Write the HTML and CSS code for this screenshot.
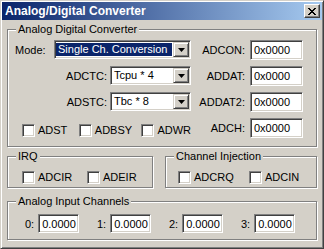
FILE: index.html
```html
<!DOCTYPE html>
<html lang="en">
<head>
  <meta charset="UTF-8" />
  <meta name="viewport" content="width=device-width, initial-scale=1.0"/>
  <title>Analog/Digital Converter</title>
  <link rel="stylesheet" href="styles.css">
</head>
<body>
  <div class="window">
    <div class="titlebar">
      <span class="title">Analog/Digital Converter</span>
      <div class="close-btn">
        <svg width="8" height="7" viewBox="0 0 8 7" shape-rendering="crispEdges">
          <path d="M0 0h2v1h-2z M6 0h2v1h-2z M1 1h2v1h-2z M5 1h2v1h-2z M2 2h4v1h-4z M3 3h2v1h-2z M2 4h4v1h-4z M1 5h2v1h-2z M5 5h2v1h-2z M0 6h2v1h-2z M6 6h2v1h-2z" fill="#000"/>
        </svg>
      </div>
    </div>

    <div class="client">
      <!-- main converter settings -->
      <div class="group adc">
        <span class="caption">Analog Digital Converter</span>
        <div class="adc-grid">
          <div class="row mode-row">
            <span class="lbl">Mode:</span>
            <div class="combo wide">
              <span class="value selected">Single Ch. Conversion</span>
              <span class="drop"><svg width="7" height="4" viewBox="0 0 7 4"><path d="M0 0h7l-3.5 4z" fill="#000"/></svg></span>
            </div>
          </div>
          <div class="row reg"><span class="lbl">ADCON:</span><input class="edit" type="text" value="0x0000"></div>

          <div class="row right">
            <span class="lbl">ADCTC:</span>
            <div class="combo short">
              <span class="value">Tcpu * 4</span>
              <span class="drop"><svg width="7" height="4" viewBox="0 0 7 4"><path d="M0 0h7l-3.5 4z" fill="#000"/></svg></span>
            </div>
          </div>
          <div class="row reg"><span class="lbl">ADDAT:</span><input class="edit" type="text" value="0x0000"></div>

          <div class="row right">
            <span class="lbl">ADSTC:</span>
            <div class="combo short">
              <span class="value">Tbc * 8</span>
              <span class="drop"><svg width="7" height="4" viewBox="0 0 7 4"><path d="M0 0h7l-3.5 4z" fill="#000"/></svg></span>
            </div>
          </div>
          <div class="row reg"><span class="lbl">ADDAT2:</span><input class="edit" type="text" value="0x0000"></div>

          <div class="row checks">
            <label class="check w54"><span class="box"></span>ADST</label>
            <label class="check w60"><span class="box"></span>ADBSY</label>
            <label class="check"><span class="box"></span>ADWR</label>
          </div>
          <div class="row reg"><span class="lbl">ADCH:</span><input class="edit" type="text" value="0x0000"></div>
        </div>
      </div>

      <div class="pair">
        <div class="group irq">
          <span class="caption">IRQ</span>
          <div class="check-row">
            <label class="check w65"><span class="box"></span>ADCIR</label>
            <label class="check"><span class="box"></span>ADEIR</label>
          </div>
        </div>
        <div class="group inj">
          <span class="caption">Channel Injection</span>
          <div class="check-row">
            <label class="check w71"><span class="box"></span>ADCRQ</label>
            <label class="check"><span class="box"></span>ADCIN</label>
          </div>
        </div>
      </div>

      <div class="group channels">
        <span class="caption">Analog Input Channels</span>
        <div class="chan-row">
          <div class="chan"><span class="lbl">0:</span><input class="edit num" type="text" value="0.0000"></div>
          <div class="chan"><span class="lbl">1:</span><input class="edit num" type="text" value="0.0000"></div>
          <div class="chan"><span class="lbl">2:</span><input class="edit num" type="text" value="0.0000"></div>
          <div class="chan"><span class="lbl">3:</span><input class="edit num" type="text" value="0.0000"></div>
        </div>
      </div>
    </div>
  </div>
</body>
</html>
```

FILE: styles.css
```css
:root {
  --face: #d4d0c8;
  --shadow: #808080;
  --dark: #404040;
  --light: #fff;
  --caption-a: #0a246a;
  --caption-b: #a6caf0;
  --font-ui: 'Liberation Sans', Arial, sans-serif;
}

html, body {
  margin: 0;
  padding: 0;
  background: var(--face);
  font-family: var(--font-ui);
  font-size: 11px;
  color: #000;
}

.window {
  width: 324px;
  height: 249px;
  box-sizing: border-box;
  border: 1px solid;
  border-color: var(--face) var(--dark) var(--dark) var(--face);
  box-shadow: inset 1px 1px var(--light), inset -1px -1px var(--shadow);
  padding: 1px;
  display: flex;
  flex-direction: column;
}

.titlebar {
  height: 18px;
  display: flex;
  align-items: center;
  justify-content: space-between;
  padding: 0 2px 0 3px;
  background: linear-gradient(to right, var(--caption-a), var(--caption-b));
}

.title {
  color: #fff;
  font-weight: bold;
  font-size: 12px;
}

.close-btn {
  width: 16px;
  height: 14px;
  box-sizing: border-box;
  display: flex;
  align-items: center;
  justify-content: center;
  background: var(--face);
  border: 1px solid;
  border-color: var(--light) var(--dark) var(--dark) var(--light);
  box-shadow: inset -1px -1px var(--shadow);
}

.client {
  flex: 1;
  padding: 9px 5px 0 5px;
  display: flex;
  flex-direction: column;
}

/* etched group box */
.group {
  position: relative;
  box-sizing: border-box;
  border: 1px solid var(--shadow);
  box-shadow: inset 1px 1px var(--light), 1px 1px var(--light);
}

.caption {
  position: absolute;
  top: -7px;
  left: 8px;
  padding: 0 2px;
  line-height: 13px;
  background: var(--face);
}

.adc {
  height: 118px;
  padding: 10px 13px 0 7px;
}

.adc-grid {
  display: grid;
  grid-template-columns: 176px 1fr;
  grid-auto-rows: 26px;
}

.row {
  display: flex;
  align-items: flex-start;
  gap: 5px;
}

.row .lbl {
  line-height: 20px;
}

.mode-row {
  justify-content: space-between;
}

.row.right {
  justify-content: flex-end;
  gap: 3px;
}

.row.reg {
  justify-content: flex-end;
}

.row.checks {
  padding-left: 7px;
  align-items: center;
  height: 24px;
}

.pair {
  margin-top: 9px;
  display: flex;
  justify-content: space-between;
}

.irq {
  width: 146px;
  height: 32px;
}

.inj {
  width: 152px;
  height: 32px;
}

.check-row {
  display: flex;
  padding: 14px 0 0 14px;
}

.inj .check-row {
  padding-left: 12px;
}

.channels {
  margin-top: 13px;
  height: 39px;
}

.chan-row {
  display: flex;
  padding: 12px 0 0 17px;
}

.chan {
  display: flex;
  align-items: center;
  gap: 4px;
  width: 72px;
}

/* controls */
.edit {
  box-sizing: border-box;
  width: 53px;
  height: 20px;
  margin: 0;
  padding: 0 0 0 3px;
  border: 1px solid;
  border-color: var(--shadow) var(--light) var(--light) var(--shadow);
  box-shadow: inset 1px 1px var(--dark), inset -1px -1px var(--face);
  background: #fff;
  font-family: var(--font-ui);
  font-size: 11px;
  color: #000;
  outline: none;
}

.edit.num {
  width: 41px;
  height: 19px;
}

.combo {
  box-sizing: border-box;
  height: 19px;
  padding: 1px;
  display: flex;
  border: 1px solid;
  border-color: var(--shadow) var(--light) var(--light) var(--shadow);
  box-shadow: inset 1px 1px var(--dark), inset -1px -1px var(--face);
  background: #fff;
}

.combo.wide {
  width: 137px;
}

.combo.short {
  width: 81px;
}

.combo .value {
  flex: 1;
  padding-left: 2px;
  line-height: 15px;
  white-space: nowrap;
  overflow: hidden;
}

.combo .value.selected {
  margin: 1px 1px 1px 0;
  line-height: 13px;
  background: var(--caption-a);
  color: #fff;
}

.combo .drop {
  width: 16px;
  box-sizing: border-box;
  display: flex;
  align-items: center;
  justify-content: center;
  background: var(--face);
  border: 1px solid;
  border-color: var(--face) var(--dark) var(--dark) var(--face);
  box-shadow: inset 1px 1px var(--light), inset -1px -1px var(--shadow);
}

.check {
  display: flex;
  align-items: center;
  gap: 3px;
  line-height: 13px;
}

.check.w54 { width: 54px; }
.check.w60 { width: 60px; }
.check.w65 { width: 65px; }
.check.w71 { width: 71px; }

.box {
  width: 13px;
  height: 13px;
  box-sizing: border-box;
  border: 1px solid;
  border-color: var(--shadow) var(--light) var(--light) var(--shadow);
  box-shadow: inset 1px 1px var(--dark), inset -1px -1px var(--face);
  background: #fff;
}
```
